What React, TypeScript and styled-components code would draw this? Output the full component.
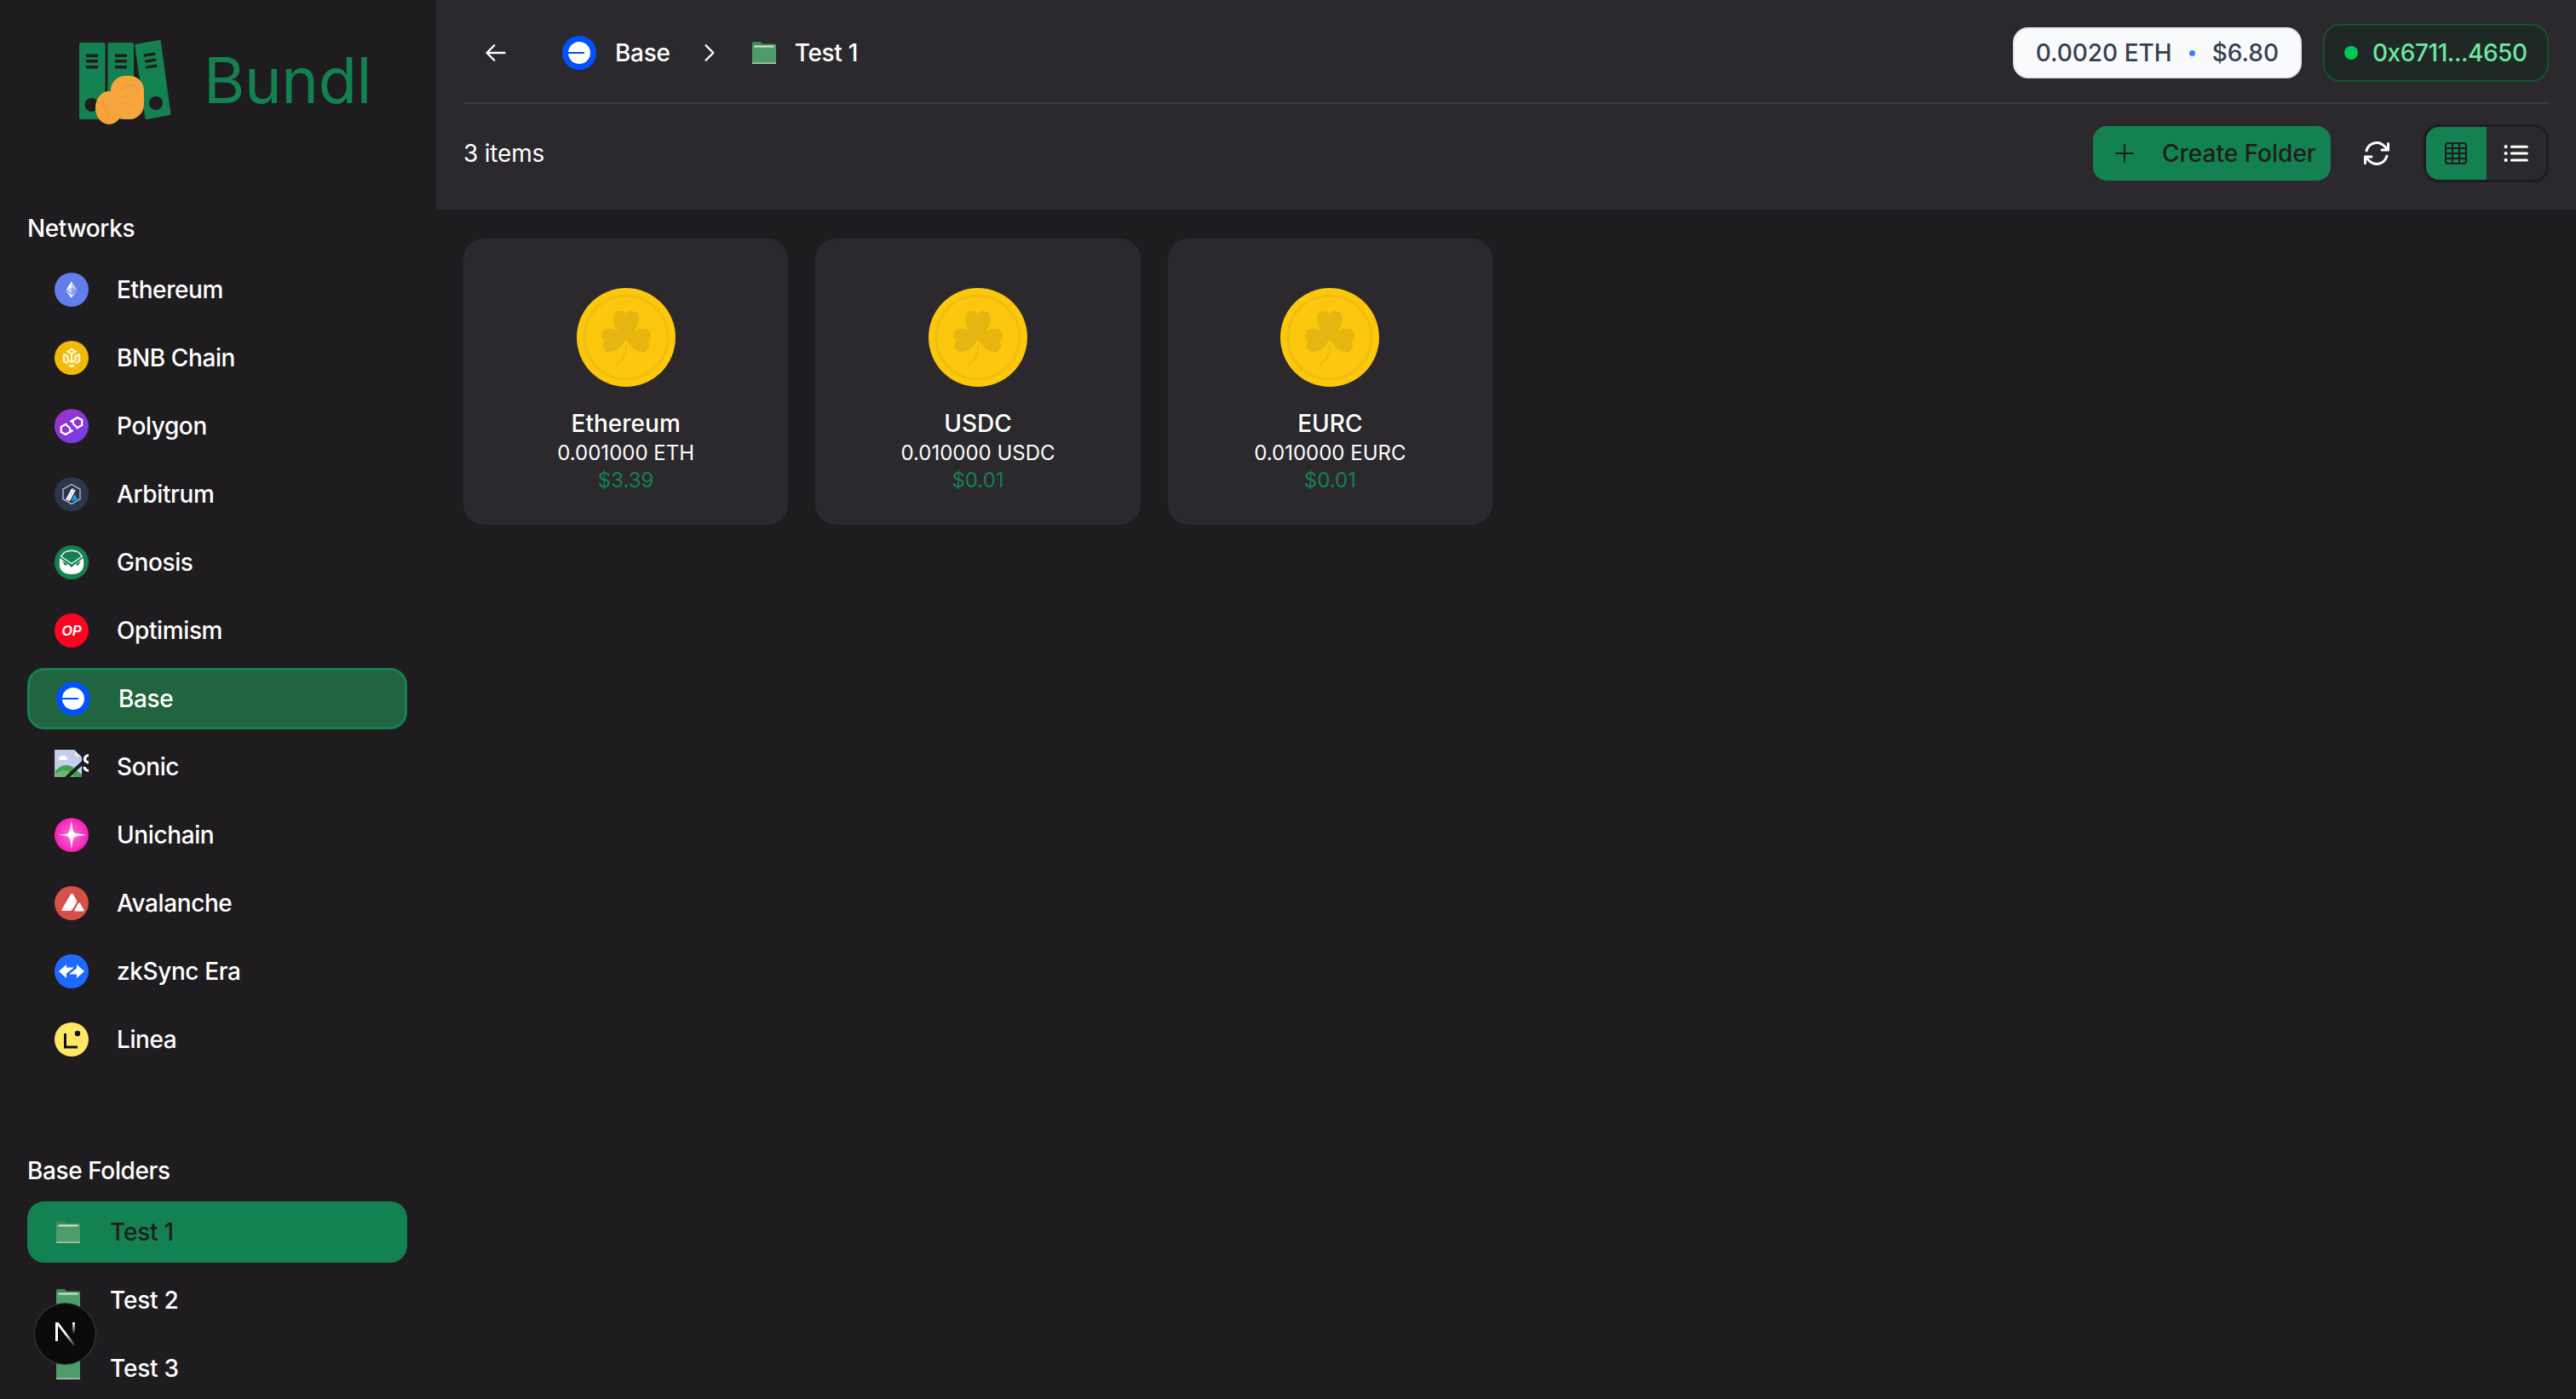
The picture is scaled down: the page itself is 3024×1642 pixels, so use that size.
import React from "react";
import styled, { createGlobalStyle } from "styled-components";
import {
  HiOutlineArrowLeft,
  HiOutlineArrowPath,
  HiOutlineChevronRight,
  HiOutlineListBullet,
  HiOutlinePlus,
} from "react-icons/hi2";

const GREEN = "#138150";
const PAGE = "#1f1c20";
const PANEL = "#2b292d";

const GlobalStyle = createGlobalStyle`
  html, body {
    margin: 0;
    height: 100%;
    background: ${PAGE};
    overflow: hidden;
  }
  * {
    box-sizing: border-box;
  }
  body {
    font-family: Inter, "Noto Sans", sans-serif;
    color: #fff;
  }
`;

const Wrapper = styled.div`
  display: flex;
  width: 100%;
  height: 100vh;
  overflow: hidden;
`;

const Sidebar = styled.aside`
  width: 512px;
  flex-shrink: 0;
  height: 100%;
  overflow: hidden;
  padding: 0 34px 0 32px;
`;

const LogoRow = styled.div`
  display: flex;
  align-items: flex-start;
  gap: 38px;
  height: 248px;
  padding: 47px 0 0 61px;
`;

const LogoText = styled.span`
  font-size: 74px;
  line-height: 100px;
  font-weight: 400;
  letter-spacing: -0.4px;
  color: ${GREEN};
  margin-top: -3px;
`;

const SectionTitle = styled.h3`
  margin: 0 0 16px;
  font-size: 28px;
  line-height: 40px;
  font-weight: 500;
  letter-spacing: -0.4px;
  color: #fff;
`;

const NavList = styled.div`
  display: flex;
  flex-direction: column;
  gap: 8px;
`;

const FolderSection = styled.div`
  margin-top: 98px;
`;

const NetworkRow = styled.div<{ $active?: boolean }>`
  display: flex;
  align-items: center;
  gap: 33px;
  height: 72px;
  padding: 0 32px;
  border-radius: 20px;
  font-size: 28px;
  font-weight: 500;
  letter-spacing: -0.4px;
  color: #fff;
  ${(p) =>
    p.$active
      ? `background: #216440; border: 3px solid ${GREEN}; padding: 0 32px 0 31px;`
      : ""}
`;

const FolderRow = styled.div<{ $active?: boolean }>`
  display: flex;
  align-items: center;
  gap: 35px;
  height: 72px;
  padding: 0 34px;
  border-radius: 20px;
  font-size: 28px;
  font-weight: 500;
  letter-spacing: -0.2px;
  color: ${(p) => (p.$active ? PAGE : "#fff")};
  background: ${(p) => (p.$active ? GREEN : "transparent")};
`;

const BrokenImage = styled.span`
  display: flex;
  align-items: flex-start;
  width: 40px;
  height: 40px;
  overflow: hidden;
  font-size: 28px;
  line-height: 32px;
  flex-shrink: 0;
`;

const Main = styled.main`
  flex: 1;
  min-width: 0;
  display: flex;
  flex-direction: column;
`;

const Header = styled.header`
  background: ${PANEL};
  height: 246px;
  padding: 0 32px;
`;

const TopBar = styled.div`
  display: flex;
  align-items: center;
  justify-content: space-between;
  height: 122px;
  padding-top: 4px;
  border-bottom: 2px solid #333d4d;
`;

const Crumbs = styled.div`
  display: flex;
  align-items: center;
  padding-left: 24px;
  font-size: 28px;
  font-weight: 500;
  letter-spacing: -0.3px;
`;

const BackIcon = styled(HiOutlineArrowLeft)`
  width: 28px;
  height: 28px;
  margin-right: 64px;
  color: #fff;
  stroke-width: 2;
`;

const CrumbIcon = styled.span`
  display: flex;
  margin-right: 22px;
`;

const CrumbChevron = styled(HiOutlineChevronRight)`
  width: 28px;
  height: 28px;
  margin: 0 36px 0 32px;
  color: #fff;
  stroke-width: 2;
`;

const Wallet = styled.div`
  display: flex;
  align-items: center;
  gap: 25px;
`;

const BalancePill = styled.div`
  display: flex;
  align-items: center;
  gap: 20px;
  height: 60px;
  padding: 0 25px;
  border-radius: 18px;
  border: 2px solid #e5e7eb;
  background: #f9fafb;
  color: #374151;
  font-size: 28px;
  font-weight: 500;
`;

const BlueDot = styled.span`
  width: 7px;
  height: 7px;
  border-radius: 50%;
  background: #3b82f6;
`;

const AddressPill = styled.div`
  display: flex;
  align-items: center;
  gap: 17px;
  width: 265px;
  height: 68px;
  padding: 0 0 0 23px;
  border-radius: 20px;
  border: 2px solid #14532d;
  background: #1f2824;
  color: #6ee7a3;
  font-size: 28px;
  font-weight: 500;
  letter-spacing: -0.45px;
`;

const GreenDot = styled.span`
  width: 16px;
  height: 16px;
  border-radius: 50%;
  background: #00c853;
`;

const Toolbar = styled.div`
  display: flex;
  align-items: center;
  justify-content: space-between;
  height: 116px;
`;

const ItemCount = styled.span`
  font-size: 28px;
  font-weight: 400;
  letter-spacing: -0.2px;
`;

const Actions = styled.div`
  display: flex;
  align-items: center;
`;

const CreateButton = styled.button`
  display: flex;
  align-items: center;
  gap: 28px;
  width: 279px;
  height: 64px;
  padding: 0 0 0 21px;
  border: none;
  border-radius: 16px;
  background: ${GREEN};
  color: ${PAGE};
  font-family: inherit;
  font-size: 28px;
  font-weight: 500;
  svg {
    width: 32px;
    height: 32px;
  }
`;

const RefreshIcon = styled(HiOutlineArrowPath)`
  width: 36px;
  height: 36px;
  margin: 0 37px 0 36px;
  color: #fff;
  stroke-width: 2;
`;

const ViewToggle = styled.div`
  display: flex;
  width: 147px;
  height: 68px;
  border: 3px solid ${PAGE};
  border-radius: 18px;
  overflow: hidden;
`;

const ToggleCell = styled.div<{ $active?: boolean }>`
  flex: 1;
  display: flex;
  align-items: center;
  justify-content: center;
  background: ${(p) => (p.$active ? GREEN : "transparent")};
  color: ${(p) => (p.$active ? PAGE : "#fff")};
`;

const ListIcon = styled(HiOutlineListBullet)`
  width: 36px;
  height: 36px;
  stroke-width: 2;
`;

const Content = styled.section`
  flex: 1;
  padding: 34px 32px;
`;

const CardGrid = styled.div`
  display: grid;
  grid-template-columns: repeat(6, 1fr);
  gap: 32px;
`;

const Card = styled.div`
  display: flex;
  flex-direction: column;
  align-items: center;
  height: 336px;
  padding-top: 58px;
  border-radius: 24px;
  background: ${PANEL};
`;

const CardName = styled.div`
  margin-top: 24px;
  font-size: 28px;
  line-height: 38px;
  font-weight: 500;
`;

const CardAmount = styled.div`
  font-size: 24px;
  line-height: 32px;
`;

const CardPrice = styled.div`
  font-size: 24px;
  line-height: 32px;
  color: ${GREEN};
`;

const DevBadge = styled.div`
  position: fixed;
  left: 41px;
  top: 1530px;
  width: 71px;
  height: 71px;
  display: flex;
  align-items: center;
  justify-content: center;
  border-radius: 50%;
  background: #0a0a0a;
  box-shadow: 0 0 0 1px #3a3a3a;
`;

function Logo() {
  return (
    <svg width="108" height="100" viewBox="93 47 108 100">
      <rect x="93" y="50" width="30.5" height="90" rx="2" fill={GREEN} />
      <rect x="126.500" y="50" width="30.5" height="90" rx="2" fill={GREEN} />
      <path d="M160 51.8 186.500 47q2-.3 2.300 1.600L200.400 133q.2 2-1.800 2.300L172.500 140q-2 .2-2.200-1.800L158.400 54q-.2-1.800 1.600-2.200z" fill={GREEN} />
      <g fill={PAGE}>
        <rect x="101" y="63.500" width="14" height="3.500" />
        <rect x="101" y="70" width="14" height="3.500" />
        <rect x="101" y="77" width="14" height="3.500" />
        <rect x="135" y="63.500" width="14" height="3.500" />
        <rect x="135" y="70" width="14" height="3.500" />
        <rect x="135" y="77" width="14" height="3.500" />
        <path d="M168.500 63.500 182 61.500l.5 3.200-13.500 2z" />
        <path d="M170 70.500 183 68.600l.5 3.200-13 2z" />
        <path d="M171 77.500 184 75.600l.5 3.200-13 2z" />
        <circle cx="107.500" cy="123" r="8" />
        <circle cx="183" cy="121" r="8" />
      </g>
      <g fill="#f6a53d">
        <rect x="130" y="89" width="39" height="51" rx="17" />
        <ellipse cx="128" cy="126.500" rx="16" ry="19.500" />
        <rect x="128" y="108" width="20" height="30" />
      </g>
      <path d="M141 104q3 2 6-1t6-3 7 3-2 6" fill="none" stroke="#d94f6b" strokeWidth="1" strokeDasharray="1 2" />
      <path d="M123 117q-3 4 0 9t4 9-5 8" fill="none" stroke="#d94f6b" strokeWidth="1" strokeDasharray="1 2" />
      <path d="M138 117q8 2 16-1M146 90l6 0M165 100l3 8-3 6M150 130l6 0" fill="none" stroke="#ffe14d" strokeWidth="1" strokeDasharray="1 3" />
    </svg>
  );
}

function GridIcon() {
  return (
    <svg width="28" height="28" viewBox="0 0 28 28" fill="none" stroke="currentColor" strokeWidth="2">
      <rect x="2" y="2" width="24" height="24" rx="3" />
      <path d="M10 2v24M18 2v24M2 8h24M2 14h24M2 20h24" />
    </svg>
  );
}

function Circle({ fill, children }: { fill: string; children?: React.ReactNode }) {
  return (
    <svg width="40" height="40" viewBox="0 0 40 40" style={{ flexShrink: 0 }}>
      <circle cx="20" cy="20" r="20" fill={fill} />
      {children}
    </svg>
  );
}

const EthIcon = () => (
  <Circle fill="#627eea">
    <path d="M20 10v7.500l6.400 3z" fill="#fff" fillOpacity=".6" />
    <path d="M20 10l-6.400 10.500 6.400-3z" fill="#fff" />
    <path d="M20 17.500v7l6.400-4z" fill="#fff" fillOpacity=".3" />
    <path d="M20 17.500l-6.400 3 6.400 4z" fill="#fff" fillOpacity=".7" />
    <path d="M20 25.700V30l6.400-8.600z" fill="#fff" fillOpacity=".6" />
    <path d="M20 25.700l-6.400-4.300L20 30z" fill="#fff" />
  </Circle>
);

const BnbIcon = () => (
  <Circle fill="#f0b90b">
    <g fill="none" stroke="#fff7cc" strokeWidth="2.400">
      <path d="M20 10l-4.500 2.700L20 15.400l4.500-2.700z" />
      <path d="M11 15.500l4.500 2.700v4.600L20 25.400l4.500-2.600v-4.600l4.500-2.700" />
      <path d="M11 15.500v8.500l4.500 2.800M29 15.500v8.500l-4.500 2.800M20 15.400v10M17 28.500l3 1.600 3-1.600" />
    </g>
  </Circle>
);

const PolygonIcon = () => (
  <svg width="40" height="40" viewBox="0 0 40 40" style={{ flexShrink: 0 }}>
    <defs>
      <linearGradient id="poly" x1="0" y1="0" x2="1" y2="1">
        <stop offset="0" stopColor="#a22fc9" />
        <stop offset="1" stopColor="#6f40e6" />
      </linearGradient>
    </defs>
    <circle cx="20" cy="20" r="20" fill="url(#poly)" />
    <path
      d="M27 22l5.200-3v-6L27 10l-5.200 3-3.400 2M14.500 17.200 13 18l-5.200 3v6L13 30l5.200-3 3.400-2M25.500 22.800 27 22"
      fill="none"
      stroke="#fff"
      strokeWidth="2.300"
    />
    <path d="M21.800 13v4.500M18.200 27v-4.500M18.200 22.500 13 18M21.800 17.500 27 22" fill="none" stroke="#fff" strokeWidth="2.300" />
  </svg>
);

const ArbitrumIcon = () => (
  <Circle fill="#2d374b">
    <path d="M20 8.500l10 5.700v11.600l-10 5.700-10-5.700V14.200z" fill="#2d374b" stroke="#b8c4d4" strokeWidth="1.300" />
    <path d="M13 26.500 20 13.500h2.600L15.700 27zM18 28 24.800 15h-2.600L15.800 27.500z" fill="#fff" />
    <path d="M24 20.500l3.500 7.500-2.400 1-2.800-5.800z" fill="#28a0f0" />
    <path d="M23 21l-3 6 2.200 1.200 2-4.400z" fill="#28a0f0" />
  </Circle>
);

const GnosisIcon = () => (
  <Circle fill={GREEN}>
    <path
      d="M6 16q0-1 1-.5L17 23l3 3 3-3 10-7.500q1-.5 1 .5 .5 7 0 9-2 9-14 9T6 25q-.5-3 0-9z"
      fill="#fff"
    />
    <path d="M7.500 13 12 8q8-3.500 16 0l4.500 5-12.500 8.500z" fill={GREEN} stroke="#fff" strokeWidth="1.300" />
    <path d="M9 18.500l6.500 3.500-3 2zM31 18.500L24.500 22l3 2z" fill={GREEN} />
  </Circle>
);

const OpText = styled.text`
  font-family: "Liberation Sans", sans-serif;
  font-size: 16px;
  font-weight: 700;
  font-style: italic;
  letter-spacing: 0;
  fill: #fff;
`;

const OptimismIcon = () => (
  <Circle fill="#ff0420">
    <OpText x="20" y="25.500" textAnchor="middle">OP</OpText>
  </Circle>
);

const BaseIcon = () => (
  <Circle fill="#0052ff">
    <circle cx="20" cy="20" r="13" fill="#fff" />
    <rect x="7" y="19" width="19" height="2" fill="#0052ff" />
  </Circle>
);

const SonicIcon = () => (
  <BrokenImage>
    <svg width="32" height="32" viewBox="0 0 32 32" style={{ flexShrink: 0 }}>
      <path d="M0 0h23l9 9v23H0z" fill="#c3d0ee" />
      <path d="M23 0v9h9z" fill="#f2f2f2" />
      <path d="M23 0l9 9h-9z" fill="#e4e8f0" stroke="#a9a9a9" strokeWidth=".6" />
      <path d="M5 12q0-5 5-5t5 5z" fill="#fff" />
      <path d="M0 32v-6q10-12 21-6l11 9v3z" fill="#45a04d" />
      <path d="M0 32v-3q10-8 18-3l6 6z" fill="#6cb870" />
      <path d="M14 33 34 14" stroke={PAGE} strokeWidth="4" />
      <path d="M0 0h1v32H0z" fill="#a9b4d0" />
    </svg>
    S
  </BrokenImage>
);

const UnichainIcon = () => (
  <svg width="40" height="40" viewBox="0 0 40 40" style={{ flexShrink: 0 }}>
    <defs>
      <radialGradient id="uni">
        <stop offset="0" stopColor="#ff6fd6" />
        <stop offset="1" stopColor="#f31fb9" />
      </radialGradient>
    </defs>
    <circle cx="20" cy="20" r="20" fill="url(#uni)" />
    <path d="M20 2q1 15 3.500 15.500T38 20q-12 1-14.500 2.500T20 38q-1-13-3.500-15.500T3 20q12-1 13.500-2.500T20 2z" fill="#fff" />
  </svg>
);

const AvalancheIcon = () => (
  <Circle fill="#d64f49">
    <path d="M19 9.500q1.500-1.500 3 0l4 7.500q.5 1.500-.5 3l-5 8q-.8 1-2 1H10q-2 0-1.200-2z" fill="#fff" />
    <path d="M28 20q1-1 2 0l4.500 8q.5 1.500-1 1.500h-9q-1.500 0-1-1.500z" fill="#fff" />
  </Circle>
);

const ZkSyncIcon = () => (
  <Circle fill="#1e69ff">
    <path d="M14 12l-9 8 9 8v-5.500l9-7h-9z" fill="#fff" />
    <path d="M26 12v4.500l-9 7h9V28l9-8z" fill="#fff" />
  </Circle>
);

const LineaIcon = () => (
  <Circle fill="#ffe866">
    <path d="M12.500 13v16H27" fill="none" stroke="#121212" strokeWidth="3" />
    <circle cx="27" cy="13" r="3.200" fill="#121212" />
  </Circle>
);

function FolderIcon() {
  return (
    <svg width="28" height="26" viewBox="0 0 28 26" style={{ flexShrink: 0 }}>
      <path d="M0 1q0-1 1-1h9l2 2.500h15q1 0 1 1V8H0z" fill="#3d8458" />
      <rect x="0" y="3.500" width="28" height="22.500" rx="1" fill="#4f9c6b" />
      <rect x="2.500" y="4.500" width="23" height="2" fill="#d5e3d5" />
      <rect x="0" y="24.500" width="28" height="1.500" fill="#b5c6ba" />
    </svg>
  );
}

function CoinIcon() {
  const leaf =
    "M0 2C-8-6-15-12-15-22C-15-29-9-31-6-31C-3-31 0-29 0-26C0-29 3-31 6-31C9-31 15-29 15-22C15-12 8-6 0 2Z";
  return (
    <svg width="116" height="116" viewBox="-58 -58 116 116">
      <circle r="58" fill="#fcc70d" />
      <circle r="49" fill="none" stroke="#f0bd10" strokeWidth="3" />
      <g fill="#e6b511">
        <path d={leaf} />
        <path d={leaf} transform="rotate(-100) scale(.92)" />
        <path d={leaf} transform="rotate(100) scale(.92)" />
      </g>
      <path d="M0 8q2 14-13 26" fill="none" stroke="#eeb90f" strokeWidth="1.500" />
    </svg>
  );
}

const networks: { name: string; icon: React.ReactNode; active?: boolean }[] = [
  { name: "Ethereum", icon: <EthIcon /> },
  { name: "BNB Chain", icon: <BnbIcon /> },
  { name: "Polygon", icon: <PolygonIcon /> },
  { name: "Arbitrum", icon: <ArbitrumIcon /> },
  { name: "Gnosis", icon: <GnosisIcon /> },
  { name: "Optimism", icon: <OptimismIcon /> },
  { name: "Base", icon: <BaseIcon />, active: true },
  { name: "Sonic", icon: <SonicIcon /> },
  { name: "Unichain", icon: <UnichainIcon /> },
  { name: "Avalanche", icon: <AvalancheIcon /> },
  { name: "zkSync Era", icon: <ZkSyncIcon /> },
  { name: "Linea", icon: <LineaIcon /> },
];

const tokens = [
  { name: "Ethereum", amount: "0.001000 ETH", price: "$3.39" },
  { name: "USDC", amount: "0.010000 USDC", price: "$0.01" },
  { name: "EURC", amount: "0.010000 EURC", price: "$0.01" },
];

function App() {
  return (
    <Wrapper>
      <GlobalStyle />
      <Sidebar>
        <LogoRow>
          <Logo />
          <LogoText>Bundl</LogoText>
        </LogoRow>
        <SectionTitle>Networks</SectionTitle>
        <NavList>
          {networks.map((n) => (
            <NetworkRow key={n.name} $active={n.active}>
              {n.icon}
              {n.name}
            </NetworkRow>
          ))}
        </NavList>
        <FolderSection>
          <SectionTitle>Base Folders</SectionTitle>
          <NavList>
            {["Test 1", "Test 2", "Test 3"].map((f, i) => (
              <FolderRow key={f} $active={i === 0}>
                <FolderIcon />
                {f}
              </FolderRow>
            ))}
          </NavList>
        </FolderSection>
      </Sidebar>
      <Main>
        <Header>
          <TopBar>
            <Crumbs>
              <BackIcon />
              <CrumbIcon>
                <BaseIcon />
              </CrumbIcon>
              Base
              <CrumbChevron />
              <CrumbIcon>
                <FolderIcon />
              </CrumbIcon>
              Test 1
            </Crumbs>
            <Wallet>
              <BalancePill>
                <span>0.0020 ETH</span>
                <BlueDot />
                <span>$6.80</span>
              </BalancePill>
              <AddressPill>
                <GreenDot />
                0x6711...4650
              </AddressPill>
            </Wallet>
          </TopBar>
          <Toolbar>
            <ItemCount>3 items</ItemCount>
            <Actions>
              <CreateButton>
                <HiOutlinePlus />
                Create Folder
              </CreateButton>
              <RefreshIcon />
              <ViewToggle>
                <ToggleCell $active>
                  <GridIcon />
                </ToggleCell>
                <ToggleCell>
                  <ListIcon />
                </ToggleCell>
              </ViewToggle>
            </Actions>
          </Toolbar>
        </Header>
        <Content>
          <CardGrid>
            {tokens.map((t) => (
              <Card key={t.name}>
                <CoinIcon />
                <CardName>{t.name}</CardName>
                <CardAmount>{t.amount}</CardAmount>
                <CardPrice>{t.price}</CardPrice>
              </Card>
            ))}
          </CardGrid>
        </Content>
      </Main>
      <DevBadge>
        <svg width="26" height="28" viewBox="0 0 26 28">
          <defs>
            <linearGradient id="nDiag" x1="0" y1="0" x2="1" y2="1">
              <stop offset=".5" stopColor="#fff" />
              <stop offset="1" stopColor="#fff" stopOpacity="0" />
            </linearGradient>
            <linearGradient id="nRight" x1="0" y1="0" x2="0" y2="1">
              <stop offset="0" stopColor="#fff" />
              <stop offset=".7" stopColor="#fff" stopOpacity="0" />
            </linearGradient>
          </defs>
          <path d="M1 0h3v22H1z" fill="#fff" />
          <path d="M1 0h3.500L25 27l-2.500 1z" fill="url(#nDiag)" />
          <path d="M21 0h3v20h-3z" fill="url(#nRight)" />
        </svg>
      </DevBadge>
    </Wrapper>
  );
}

export default App;
